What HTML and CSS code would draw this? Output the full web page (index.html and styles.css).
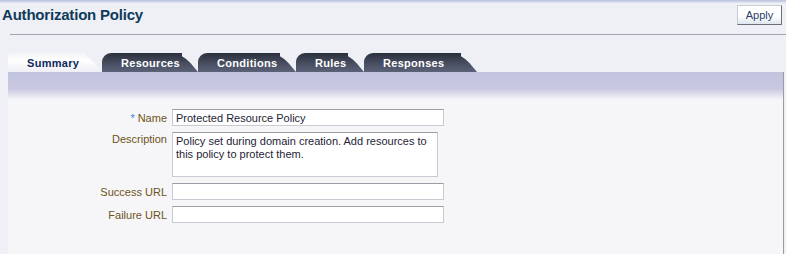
FILE: index.html
```html
<!DOCTYPE html>
<html>
<head>
    <title>Authorization Policy</title>
    <link rel="stylesheet" href="styles.css">
</head>
<body>
    <!-- Page header with title and apply button -->
    <div class="top-strip"></div>
    <div class="header">
        <h1 class="title">Authorization Policy</h1>
        <button class="apply-btn">Apply</button>
    </div>

    <!-- Tabs -->
    <ul class="tabs">
        <li class="tab active t-summary"><span>Summary</span></li>
        <li class="tab t-resources"><span>Resources</span></li>
        <li class="tab t-conditions"><span>Conditions</span></li>
        <li class="tab t-rules"><span>Rules</span></li>
        <li class="tab t-responses"><span>Responses</span></li>
    </ul>

    <!-- Summary panel -->
    <div class="panel">
        <div class="panel-band"></div>
        <div class="form">
            <label class="form-label"><span class="req">*</span>Name</label>
            <input type="text" class="field" value="Protected Resource Policy">

            <label class="form-label label-top">Description</label>
            <textarea class="field area">Policy set during domain creation. Add resources to this policy to protect them.</textarea>

            <label class="form-label">Success URL</label>
            <input type="text" class="field">

            <label class="form-label">Failure URL</label>
            <input type="text" class="field">
        </div>
    </div>
</body>
</html>
```

FILE: styles.css
```css
* {
  padding: 0;
  margin: 0;
  box-sizing: border-box;
  list-style: none;
}

body {
  font-family: "Liberation Sans", Arial, sans-serif;
  font-size: 11px;
  background: #eef0f5;
  height: 254px;
  overflow: hidden;
}

/* Header */
.top-strip {
  height: 3px;
  background: linear-gradient(#b8c0dc, #e4e8f2);
}

.header {
  height: 32px;
  margin-left: 10px;
  border-bottom: 1px solid #a4a6ae;
  display: flex;
  justify-content: space-between;
  align-items: flex-start;
}

.title {
  margin-left: -8px;
  margin-top: 3px;
  font-size: 15px;
  font-weight: bold;
  color: #0f3a5a;
  letter-spacing: -0.2px;
}

.apply-btn {
  margin-top: 2px;
  margin-right: 4px;
  width: 45px;
  height: 20px;
  font-family: "Liberation Sans", Arial, sans-serif;
  font-size: 11px;
  color: #2c3e6a;
  background: linear-gradient(#ffffff 55%, #dfe6ee);
  border: 1px solid #c8ccd4;
  border-right-color: #6a6e78;
  border-bottom-color: #6a6e78;
}

/* Tabs */
.tabs {
  display: flex;
  margin: 18px 0 0 8px;
  height: 19px;
}

.tab {
  position: relative;
  height: 19px;
  padding-left: 19px;
  font-weight: bold;
  font-size: 11px;
  letter-spacing: 0.3px;
  color: #ffffff;
  line-height: 21px;
}

.tab span {
  position: relative;
  z-index: 2;
}

.tab::before {
  content: "";
  position: absolute;
  left: 0;
  top: 0;
  bottom: 0;
  right: 16px;
  border-top-left-radius: 9px;
  background: linear-gradient(#2b303d, #4a5164 60%, #5b6278);
}

.tab::after {
  content: "";
  position: absolute;
  top: 0;
  bottom: 0;
  right: 0;
  width: 30px;
  transform: skewX(40deg);
  transform-origin: bottom left;
  border-top-right-radius: 10px;
  background: linear-gradient(#2b303d, #4a5164 60%, #5b6278);
}

.tab.active {
  color: #0c2a5c;
  z-index: 3;
}

.tab.active::before,
.tab.active::after {
  background: linear-gradient(#f4f4f6, #ffffff 40%, #eeeef6);
}

.tab.active::before {
  border-top-left-radius: 3px;
}

.t-summary { width: 94px; }
.t-resources { width: 96px; }
.t-conditions { width: 98px; }
.t-rules { width: 68px; }
.t-responses { width: 113px; }

/* Panel */
.panel {
  margin-left: 8px;
  width: 776px;
  height: 182px;
  background: #f6f6f9;
  border-right: 1px solid #9a9ca4;
}

.panel-band {
  height: 28px;
  background: linear-gradient(#c2c3de, #c8c9e0 60%, #f6f6f9);
}

.form {
  display: grid;
  grid-template-columns: 159px 272px;
  column-gap: 5px;
  row-gap: 6px;
  padding-top: 9px;
}

.form-label {
  text-align: right;
  color: #6e5318;
  align-self: center;
}

.label-top {
  align-self: start;
  padding-top: 1px;
}

.req {
  color: #3f82cf;
  margin-right: 3px;
}

.field {
  height: 17px;
  padding: 0 3px;
  font-family: "Liberation Sans", Arial, sans-serif;
  font-size: 11px;
  color: #1e2436;
  background: #ffffff;
  border: 1px solid #c9cbd2;
  border-top-color: #9c9ea6;
  outline: none;
}

.area {
  width: 266px;
  height: 45px;
  padding: 2px 3px;
  resize: none;
  line-height: 13px;
}
```
